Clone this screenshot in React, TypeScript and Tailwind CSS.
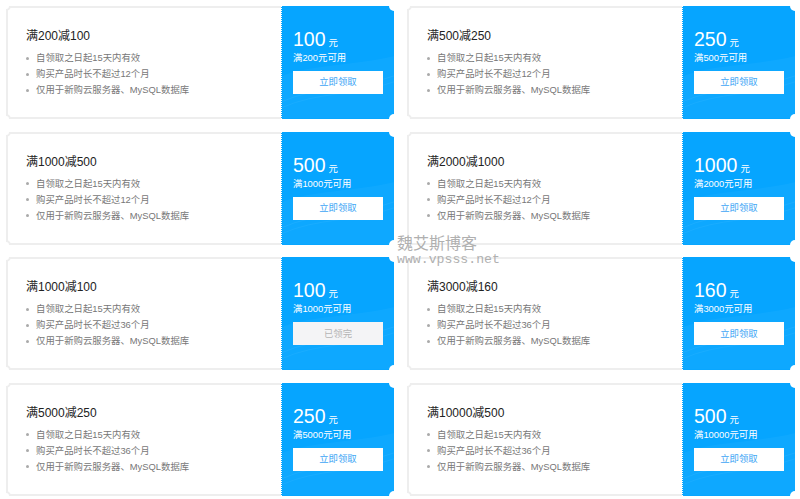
const coupons = [
  { title: "满200减100", amount: "100", limit: "满200元可用", months: 12 },
  { title: "满500减250", amount: "250", limit: "满500元可用", months: 12 },
  { title: "满1000减500", amount: "500", limit: "满1000元可用", months: 12 },
  { title: "满2000减1000", amount: "1000", limit: "满2000元可用", months: 12 },
  { title: "满1000减100", amount: "100", limit: "满1000元可用", months: 36, out: true },
  { title: "满3000减160", amount: "160", limit: "满3000元可用", months: 36 },
  { title: "满5000减250", amount: "250", limit: "满5000元可用", months: 36 },
  { title: "满10000减500", amount: "500", limit: "满10000元可用", months: 36 },
];

function Notch({ className }: { className: string }) {
  return <span className={`absolute z-10 h-[10px] w-[10px] rounded-full bg-white ${className}`} />;
}

function Coupon({ title, amount, limit, months, out }: (typeof coupons)[number] & { out?: boolean }) {
  return (
    <div className="relative flex h-[113px] overflow-hidden">
      {/* Left side */}
      <div className="flex-1 border-2 border-r-0 border-[#eeeeee] pl-[18px] pt-[19px]">
        <h3 className="text-[12px] leading-[18px] text-[#222]">{title}</h3>
        <ul className="mt-[5px] text-[9.4px] leading-[16px] text-[#777]">
          {["自领取之日起15天内有效", `购买产品时长不超过${months}个月`, "仅用于新购云服务器、MySQL数据库"].map((line) => (
            <li key={line} className="flex items-center">
              <span className="mr-[7px] h-[3px] w-[3px] rounded-full bg-[#aaa]" />
              {line}
            </li>
          ))}
        </ul>
      </div>

      {/* Blue side */}
      <div className="relative w-[113px] shrink-0 border-l border-dotted border-white bg-[#06a5ff] pl-[11px] pt-[21px] text-white">
        <svg viewBox="0 0 113 113" className="absolute inset-0 h-full w-full" fill="none">
          <path d="M0 70C32 58 72 60 113 50V113H0Z" fill="#ffffff" fillOpacity="0.035" />
          <path d="M0 96C35 80 75 84 113 70" stroke="#ffffff" strokeOpacity="0.06" />
          <path d="M0 102C35 86 75 90 113 76" stroke="#ffffff" strokeOpacity="0.05" />
        </svg>
        <div className="relative flex h-[24px] items-baseline">
          <span className="text-[19.5px] leading-[24px]">{amount}</span>
          <span className="ml-[3px] text-[9.4px]">元</span>
        </div>
        <p className="relative text-[9.4px] leading-[13px]">{limit}</p>
        <button
          className={`relative mt-[7px] flex h-[23px] w-[90px] items-center justify-center text-[9.4px] ${
            out ? "bg-[#f4f4f6] text-[#b5b5b5]" : "bg-white text-[#3ea6f5]"
          }`}
        >
          {out ? "已领完" : "立即领取"}
        </button>
      </div>

      <Notch className="-left-[5px] -top-[5px] border-2 border-[#eeeeee]" />
      <Notch className="-bottom-[5px] -left-[5px] border-2 border-[#eeeeee]" />
      <Notch className="-right-[5px] -top-[5px]" />
      <Notch className="-bottom-[5px] -right-[5px]" />
    </div>
  );
}

export default function App() {
  return (
    <div
      className="relative h-[499px] w-[800px] overflow-hidden bg-white pl-[6px] pt-[6px]"
      style={{ fontFamily: '"Liberation Sans", "Noto Sans CJK SC", sans-serif' }}
    >
      <div className="grid w-[789px] grid-cols-[388px_388px] gap-x-[13px] gap-y-[12.6px]">
        {coupons.map((c) => (
          <Coupon key={c.title} {...c} />
        ))}
      </div>

      {/* Watermark */}
      <div className="absolute left-[397px] top-[234px] z-20 text-[#b0b0b0]">
        <div className="text-[16px] leading-[20px]">魏艾斯博客</div>
        <div className="font-['Liberation_Mono'] text-[13.2px] leading-[11px]">www.vpsss.net</div>
      </div>
    </div>
  );
}
